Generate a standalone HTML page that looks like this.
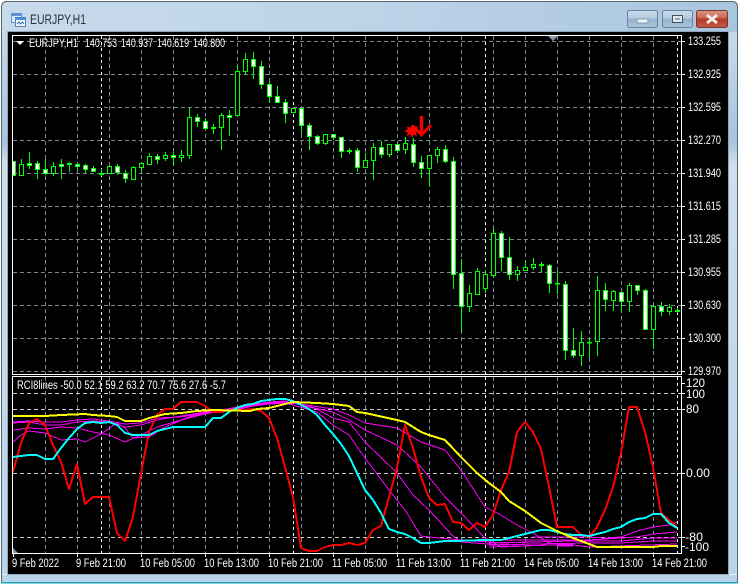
<!DOCTYPE html>
<html><head><meta charset="utf-8"><title>EURJPY,H1</title>
<style>
html,body{margin:0;padding:0;background:#fff;width:739px;height:584px;overflow:hidden}
svg{display:block}
text{font-family:"Liberation Sans",sans-serif;font-size:11.5px;fill:#ffffff}
</style></head><body>
<svg width="739" height="584" viewBox="0 0 739 584" xmlns="http://www.w3.org/2000/svg">
<defs>
<linearGradient id="fr" x1="0" y1="0" x2="1" y2="0.12"><stop offset="0" stop-color="#c9dbeb"/><stop offset=".5" stop-color="#bdd3e8"/><stop offset="1" stop-color="#a8c5df"/></linearGradient>
<linearGradient id="side" x1="0" y1="0" x2="0" y2="1"><stop offset="0" stop-color="#c6d9ea"/><stop offset=".2" stop-color="#a9c4de"/><stop offset=".24" stop-color="#cfdeed"/><stop offset="1" stop-color="#b9d3ea"/></linearGradient>
<linearGradient id="btn" x1="0" y1="0" x2="0" y2="1"><stop offset="0" stop-color="#cbdcec"/><stop offset=".45" stop-color="#b5cbe0"/><stop offset=".5" stop-color="#95b2cf"/><stop offset="1" stop-color="#a9c4dd"/></linearGradient>
<linearGradient id="cls" x1="0" y1="0" x2="0" y2="1"><stop offset="0" stop-color="#d89a8c"/><stop offset=".45" stop-color="#c8614f"/><stop offset=".5" stop-color="#b53a2a"/><stop offset="1" stop-color="#c55a48"/></linearGradient>
<clipPath id="main"><rect x="13" y="36" width="668" height="338"/></clipPath>
<clipPath id="ind"><rect x="13" y="377" width="668" height="176"/></clipPath>
</defs>

<path d="M1.5 583V7Q1.5 1.5 7 1.5H732Q737.5 1.5 737.5 7V583Z" fill="url(#fr)" stroke="#56676f"/>
<rect x="2" y="32" width="6" height="550" fill="url(#side)"/>
<rect x="728" y="32" width="9" height="550" fill="url(#side)"/>
<rect x="2" y="574" width="735" height="8" fill="#b9d3ea"/>
<rect x="2" y="574" width="735" height="1" fill="#eef5fb"/>
<rect x="1" y="582" width="737" height="1.5" fill="#1ea4b6"/>
<rect x="7.5" y="31.5" width="721" height="543" fill="none" stroke="#8fa5b8"/>
<rect x="8" y="32" width="720" height="542" fill="#000"/>

<!-- title icon -->
<g shape-rendering="crispEdges">
<rect x="11.5" y="13.5" width="10" height="9" fill="#dbe9f6" stroke="#5b8fc8"/>
<rect x="12" y="14" width="9" height="2" fill="#5b95d6"/>
<rect x="15.5" y="17.5" width="10" height="9" fill="#f3f8fd" stroke="#4f86c2"/>
<rect x="16" y="18" width="9" height="2" fill="#4f8fd2"/>
</g>
<path d="M17 24l2-2 1.500 2 2-2 1.500 2" fill="none" stroke="#2e6fb5"/>
<text x="30" y="24" style="font-size:13.5px;fill:#26323c" textLength="56" lengthAdjust="spacingAndGlyphs">EURJPY,H1</text>

<!-- window buttons -->
<rect x="627.500" y="10.500" width="30" height="17" rx="2" fill="url(#btn)" stroke="#6d8198"/>
<rect x="637" y="19" width="11" height="4" rx="1" fill="#eef3f8" stroke="#75879a" stroke-width=".8"/>
<rect x="662.500" y="10.500" width="30" height="17" rx="2" fill="url(#btn)" stroke="#6d8198"/>
<rect x="672.500" y="15.500" width="10" height="7" fill="#dfe8f1" stroke="#43515f"/>
<rect x="675" y="18" width="5" height="2" fill="#8ea6bd"/>
<rect x="696.500" y="10.500" width="31" height="17" rx="2" fill="url(#cls)" stroke="#7e3328"/>
<path d="M707 15l10 8M717 15l-10 8" stroke="#f6ece8" stroke-width="3"/>

<!-- grid -->
<g shape-rendering="crispEdges" fill="none">
<path clip-path="url(#main)" stroke="#778899" stroke-dasharray="4 3" d="M13 41.500H681M13 74.500H681M13 107.500H681M13 140.500H681M13 173.500H681M13 206.500H681M13 239.500H681M13 272.500H681M13 305.500H681M13 338.500H681M13 371.500H681M45.500 36V374M77.500 36V374M109.500 36V374M141.500 36V374M173.500 36V374M205.500 36V374M237.500 36V374M269.500 36V374M301.500 36V374M333.500 36V374M365.500 36V374M397.500 36V374M429.500 36V374M461.500 36V374M493.500 36V374M525.500 36V374M557.500 36V374M589.500 36V374M621.500 36V374M653.500 36V374"/>
<path clip-path="url(#ind)" stroke="#778899" stroke-dasharray="4 3" d="M45.500 377V553M77.500 377V553M109.500 377V553M141.500 377V553M173.500 377V553M205.500 377V553M237.500 377V553M269.500 377V553M301.500 377V553M333.500 377V553M365.500 377V553M397.500 377V553M429.500 377V553M461.500 377V553M493.500 377V553M525.500 377V553M557.500 377V553M589.500 377V553M621.500 377V553M653.500 377V553"/>
<path clip-path="url(#ind)" stroke="#c8c8c8" stroke-dasharray="4 3" d="M13 393.500H681M13 409.500H681M13 473.500H681M13 537.500H681"/>
<path stroke="#fff" stroke-dasharray="3 3" d="M101.500 36V374M293.500 36V374M485.500 36V374M677.500 36V374M101.500 377V553M293.500 377V553M485.500 377V553M677.500 377V553"/>
<rect x="12.500" y="35.500" width="669" height="339" stroke="#fff"/>
<rect x="12.500" y="376.500" width="669" height="177" stroke="#fff"/>
<path stroke="#fff" d="M682 41.500h3M682 74.500h3M682 107.500h3M682 140.500h3M682 173.500h3M682 206.500h3M682 239.500h3M682 272.500h3M682 305.500h3M682 338.500h3M682 371.500h3M682 383.500h3M682 393.500h3M682 409.500h3M682 473.500h3M682 537.500h3M682 546.500h3M13.500 554v3M77.500 554v3M141.500 554v3M205.500 554v3M269.500 554v3M333.500 554v3M397.500 554v3M461.500 554v3M525.500 554v3M589.500 554v3M653.500 554v3"/>
</g>
<path d="M548 36h10l-5 5z" fill="#8a98a6"/>
<path d="M13 548l5 5h-5z" fill="#8a98a6"/>

<!-- candles -->
<g clip-path="url(#main)" shape-rendering="crispEdges">
<path fill="none" stroke="#00ff00" d="M21.500 159V175M29.500 152V169M37.500 161V179M45.500 159V175M53.500 162V176M61.500 159V179M69.500 162V172M77.500 163V170M85.500 164V173M93.500 166V172M101.500 169V176M117.500 164V175M125.500 170V183M133.500 166V180M141.500 162V172M149.500 153V165M157.500 154V164M165.500 152V161M173.500 152V166M181.500 150V162M189.500 108V159M197.500 114V127M205.500 118V130M213.500 124V134M221.500 113V150M229.500 110V136M237.500 65V117M245.500 53V75M253.500 52V79M261.500 61V89M269.500 82V103M277.500 86V103M285.500 99V123M293.500 108V113M301.500 108V134M309.500 123V150M317.500 135V145M325.500 134V145M333.500 134V140M341.500 137V158M349.500 148V154M357.500 148V172M365.500 153V168M373.500 143V180M381.500 141V158M389.500 144V157M397.500 143V153M405.500 137V154M413.500 138V167M421.500 156V178M429.500 155V187M437.500 147V163M445.500 145V163M453.500 157V289M461.500 259V332M469.500 285V312M477.500 268V294M485.500 270V293M493.500 228V277M501.500 231V271M509.500 237V280M517.500 266V281M525.500 261V271M533.500 258V270M541.500 262V272M549.500 264V293M557.500 271V294M565.500 281V360M573.500 328V358M581.500 331V366M589.500 339V358M597.500 276V356M605.500 283V311M613.500 290V311M621.500 292V313M629.500 283V312M637.500 285V295M645.500 289V330M653.500 305V349M661.500 302V316M669.500 304V315M677.500 308V313"/>
<path fill="#000" stroke="#00ff00" d="M19.500 164.500h4v11h-4zM51.500 166.500h4v7h-4zM107.500 166.500h4v7h-4zM131.500 167.500h4v12h-4zM139.500 163.500h4v4h-4zM147.500 156.500h4v8h-4zM163.500 155.500h4v3h-4zM179.500 155.500h4v2h-4zM187.500 117.500h4v38h-4zM219.500 115.500h4v12h-4zM235.500 71.500h4v44h-4zM243.500 59.500h4v12h-4zM291.500 108.500h4v4h-4zM323.500 134.500h4v9h-4zM363.500 160.500h4v7h-4zM371.500 147.500h4v13h-4zM387.500 144.500h4v10h-4zM403.500 143.500h4v6h-4zM427.500 155.500h4v13h-4zM435.500 149.500h4v6h-4zM467.500 293.500h4v13h-4zM475.500 271.500h4v23h-4zM483.500 274.500h4v14h-4zM491.500 233.500h4v42h-4zM515.500 270.500h4v4h-4zM523.500 267.500h4v3h-4zM531.500 264.500h4v3h-4zM579.500 342.500h4v13h-4zM595.500 290.500h4v51h-4zM611.500 291.500h4v9h-4zM627.500 285.500h4v16h-4zM651.500 306.500h4v23h-4zM667.500 307.500h4v4h-4z"/>
<path fill="#fff" stroke="#00ff00" d="M11.500 161.500h4v14h-4zM27.500 163.500h4v2h-4zM35.500 163.500h4v6h-4zM43.500 169.500h4v4h-4zM59.500 164.500h4v2h-4zM67.500 163.500h4v1h-4zM75.500 164.500h4v2h-4zM83.500 165.500h4v4h-4zM91.500 168.500h4v3h-4zM99.500 173.500h4v1h-4zM115.500 166.500h4v6h-4zM123.500 173.500h4v5h-4zM155.500 156.500h4v3h-4zM171.500 155.500h4v2h-4zM195.500 117.500h4v4h-4zM203.500 121.500h4v7h-4zM211.500 127.500h4v1h-4zM227.500 115.500h4v2h-4zM251.500 59.500h4v7h-4zM259.500 66.500h4v18h-4zM267.500 84.500h4v12h-4zM275.500 96.500h4v6h-4zM283.500 102.500h4v11h-4zM299.500 108.500h4v17h-4zM307.500 125.500h4v11h-4zM315.500 136.500h4v7h-4zM331.500 134.500h4v3h-4zM339.500 137.500h4v14h-4zM347.500 150.500h4v1h-4zM355.500 150.500h4v17h-4zM379.500 147.500h4v7h-4zM395.500 144.500h4v6h-4zM411.500 144.500h4v18h-4zM419.500 162.500h4v6h-4zM443.500 149.500h4v12h-4zM451.500 161.500h4v113h-4zM459.500 273.500h4v33h-4zM499.500 233.500h4v24h-4zM507.500 257.500h4v17h-4zM539.500 264.500h4v1h-4zM547.500 265.500h4v18h-4zM555.500 283.500h4v.5h-4zM563.500 284.500h4v66h-4zM571.500 350.500h4v5h-4zM587.500 342.500h4v.5h-4zM603.500 290.500h4v9h-4zM619.500 292.500h4v9h-4zM635.500 285.500h4v5h-4zM643.500 290.500h4v39h-4zM659.500 306.500h4v5h-4zM675.500 310.500h4v1h-4z"/>
</g>

<!-- arrow and star -->
<path d="M421.500 116V135" stroke="#f00000" stroke-width="3.500" fill="none"/>
<path d="M431 125L421.500 135L413 126" stroke="#f00000" stroke-width="3" fill="none"/>
<path d="M412.500 124l1.500 3.500 4-1.500-1.500 3.500 3 1.500-3.500 1.500 1 4-3.500-2-1.500 4-1.500-4-4 1.500 1.500-3.500-4-1.500 4-1.500-1.500-3 4 1z" fill="#ff0000"/>

<!-- indicators -->
<g clip-path="url(#ind)" fill="none" shape-rendering="crispEdges" stroke-linejoin="round">
<g stroke="#ff00ff">
<polyline points="13,422 29,421 45,422 61,422 77,420 93,419 109,421 125,424 141,423 157,418 181,417 205,413 237,409 253,406 269,404 293,403"/>
<polyline points="13,423 29,422 45,425 61,425 77,422 93,421 109,422 125,427 141,425 157,420 181,416 205,412 237,408 253,405 269,403 293,404"/>
<polyline points="13,430 29,428 45,429 61,427 77,428 93,432 109,435 125,442 141,435 157,427 181,420 205,414 237,408 253,405 269,402 293,404"/>
<polyline points="13,442 21,435 29,431 45,433 61,440 77,439 85,442 101,434 117,423 125,428 133,438 149,437 165,427 189,417 213,412 237,407 253,404 269,402 293,404"/>
<polyline stroke-width="3" points="240,408 253,405 269,403 285,402 293,404"/>
<polyline points="293,405 317,412 333,425 349,435 365,458 389,490 405,510 421,536 429,537 461,540 501,543 533,542"/>
<polyline points="293,403 317,409 333,418 349,422 365,442 397,473 413,495 429,510 453,536 461,542 501,545 533,544"/>
<polyline points="293,403 333,412 349,420 365,430 397,445 421,467 445,497 461,513 485,538 501,547 549,545"/>
<polyline points="293,403 333,409 349,415 365,423 397,428 421,442 445,450 461,470 485,507 501,515 517,525 533,533 549,543 573,545"/>
<polyline points="533,537 557,537 589,537 605,538 621,537 637,531 653,527 669,525 677,522"/>
<polyline points="489,540 533,540 589,540 621,538 637,537 653,534 677,532"/>
<polyline points="489,543 533,542 573,541 621,541 653,538 677,538"/>
<polyline points="489,545 533,544 589,543 621,543 653,541 677,541"/>
<polyline points="489,547 549,545 573,545 589,547 677,544"/>
<polyline stroke-width="3" points="557,545 573,545"/>
</g>
<polyline stroke="#ff0000" stroke-width="2" points="13,472 21,443 29,423 37,419 45,425 53,445 61,462 69,489 77,464 85,504 93,497 109,497 117,533 125,541 133,517 141,473 149,432 157,415 165,409 173,409 181,402 197,402 205,406 213,412 221,412 229,410 245,410 253,409 261,411 269,418 277,438 285,467 293,497 301,548 309,551 317,551 325,547 333,545 341,545 349,543 357,545 365,543 373,530 381,526 389,497 397,468 405,425 413,448 421,477 429,498 437,505 445,504 453,522 461,523 469,530 477,523 485,527 493,515 501,490 509,472 517,432 525,422 533,432 541,449 549,487 557,527 573,527 581,535 589,537 597,527 605,510 613,487 621,453 629,407 637,407 645,432 653,467 661,513 669,520 677,527"/>
<polyline stroke="#00ffff" stroke-width="2" points="13,457 21,456 29,455 37,455 45,459 53,459 61,448 69,438 77,429 85,423 93,422 101,423 109,422 117,425 125,433 133,435 149,435 157,431 165,429 173,427 205,427 213,418 221,418 229,412 237,408 245,405 253,404 261,401 269,400 277,399 285,399 293,401 301,405 309,409 317,415 325,425 333,434 341,444 349,456 357,473 365,490 373,500 381,513 389,529 397,532 405,534 413,538 421,543 429,543 437,542 445,541 453,541 485,540 501,540 509,538 517,536 525,534 533,532 541,530 549,530 557,532 565,534 573,535 581,535 589,536 597,534 605,532 613,529 621,527 629,522 637,519 645,518 653,514 661,514 669,523 677,528"/>
<polyline stroke="#ffff00" stroke-width="2" points="13,416 45,416 61,415 85,414 93,415 109,416 117,417 125,421 141,421 149,418 165,414 181,413 197,411 213,410 250,411 257,409 269,408 285,404 293,402 317,403 333,404 349,406 357,412 365,413 397,420 405,422 421,432 429,435 445,440 461,457 477,473 489,483 501,492 509,501 525,511 541,523 557,531 573,538 589,544 597,547 653,547 661,546 677,546"/>
</g>

<!-- text -->
<path d="M16 41h8l-4 4z" fill="#fff"/>
<text x="29" y="47" textLength="49" lengthAdjust="spacingAndGlyphs">EURJPY,H1</text>
<text x="85" y="47" textLength="32" lengthAdjust="spacingAndGlyphs">140.753</text>
<text x="121" y="47" textLength="32" lengthAdjust="spacingAndGlyphs">140.937</text>
<text x="157" y="47" textLength="32" lengthAdjust="spacingAndGlyphs">140.619</text>
<text x="193" y="47" textLength="32" lengthAdjust="spacingAndGlyphs">140.800</text>
<text x="17" y="389" textLength="209" lengthAdjust="spacingAndGlyphs">RCI8lines -50.0 52.1 59.2 63.2 70.7 75.6 27.6 -5.7</text>
<g>
<text x="688" y="45" textLength="33" lengthAdjust="spacingAndGlyphs">133.255</text>
<text x="688" y="78" textLength="33" lengthAdjust="spacingAndGlyphs">132.925</text>
<text x="688" y="111" textLength="33" lengthAdjust="spacingAndGlyphs">132.595</text>
<text x="688" y="144" textLength="33" lengthAdjust="spacingAndGlyphs">132.270</text>
<text x="688" y="177" textLength="33" lengthAdjust="spacingAndGlyphs">131.940</text>
<text x="688" y="210" textLength="33" lengthAdjust="spacingAndGlyphs">131.615</text>
<text x="688" y="243" textLength="33" lengthAdjust="spacingAndGlyphs">131.285</text>
<text x="688" y="276" textLength="33" lengthAdjust="spacingAndGlyphs">130.955</text>
<text x="688" y="309" textLength="33" lengthAdjust="spacingAndGlyphs">130.630</text>
<text x="688" y="342" textLength="33" lengthAdjust="spacingAndGlyphs">130.300</text>
<text x="688" y="375" textLength="33" lengthAdjust="spacingAndGlyphs">129.970</text>
<text x="686" y="387" textLength="19" lengthAdjust="spacingAndGlyphs">120</text>
<text x="686" y="398" textLength="19" lengthAdjust="spacingAndGlyphs">100</text>
<text x="686" y="413" textLength="13" lengthAdjust="spacingAndGlyphs">80</text>
<text x="686" y="477" textLength="24" lengthAdjust="spacingAndGlyphs">0.00</text>
<text x="685" y="541" textLength="18" lengthAdjust="spacingAndGlyphs">-80</text>
<text x="685" y="551" textLength="24" lengthAdjust="spacingAndGlyphs">-100</text>
</g>
<g>
<text x="12" y="567" textLength="47" lengthAdjust="spacingAndGlyphs">9 Feb 2022</text>
<text x="76" y="567" textLength="50" lengthAdjust="spacingAndGlyphs">9 Feb 21:00</text>
<text x="140" y="567" textLength="55" lengthAdjust="spacingAndGlyphs">10 Feb 05:00</text>
<text x="204" y="567" textLength="55" lengthAdjust="spacingAndGlyphs">10 Feb 13:00</text>
<text x="268" y="567" textLength="55" lengthAdjust="spacingAndGlyphs">10 Feb 21:00</text>
<text x="332" y="567" textLength="55" lengthAdjust="spacingAndGlyphs">11 Feb 05:00</text>
<text x="396" y="567" textLength="55" lengthAdjust="spacingAndGlyphs">11 Feb 13:00</text>
<text x="460" y="567" textLength="55" lengthAdjust="spacingAndGlyphs">11 Feb 21:00</text>
<text x="524" y="567" textLength="55" lengthAdjust="spacingAndGlyphs">14 Feb 05:00</text>
<text x="588" y="567" textLength="55" lengthAdjust="spacingAndGlyphs">14 Feb 13:00</text>
<text x="652" y="567" textLength="55" lengthAdjust="spacingAndGlyphs">14 Feb 21:00</text>
</g>
</svg>
</body></html>
